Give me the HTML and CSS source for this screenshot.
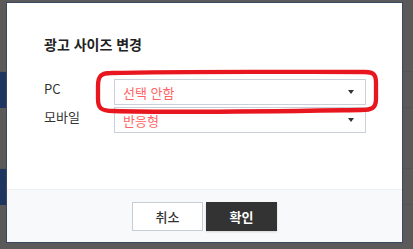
FILE: index.html
```html
<!DOCTYPE html>
<html lang="ko">
<head>
<meta charset="utf-8">
<link rel="stylesheet" href="styles.css">
</head>
<body>
<div class="page">
  <div class="page-row page-row--top"></div>
  <div class="page-row page-row--nav"><span class="nav-block"></span></div>
  <div class="page-row page-row--mid"></div>
  <div class="page-row page-row--nav"><span class="nav-block"></span></div>
</div>

<div class="modal">
  <div class="modal-body">
    <h2 class="modal-title">광고 사이즈 변경</h2>
    <div class="form">
      <div class="form-row">
        <span class="form-label">PC</span>
        <div class="select"><span class="select-value">선택 안함</span><span class="select-arrow"></span></div>
      </div>
      <div class="form-row">
        <span class="form-label">모바일</span>
        <div class="select"><span class="select-value">반응형</span><span class="select-arrow"></span></div>
      </div>
    </div>
  </div>
  <div class="modal-footer">
    <button class="btn btn--cancel">취소</button>
    <button class="btn btn--ok">확인</button>
  </div>
</div>

<svg class="annotation" width="290" height="48" viewBox="0 0 290 48">
  <path d="M16 4 C90 2 200 3 270 3 C279 3 281 6 281 14 L281 30 C281 39 277 41 266 41 C200 42 90 44 18 42 C6 42 3 39 3 30 L3 17 C3 7 6 4 16 4 Z" fill="none" stroke="#e8161e" stroke-width="4.3"/>
</svg>
</body>
</html>
```

FILE: styles.css
```css
* { box-sizing: border-box; }
html, body { margin: 0; padding: 0; }
body {
  width: 413px;
  height: 249px;
  overflow: hidden;
  position: relative;
  background: #5a5a5a;
  font-family: "Noto Sans CJK KR", "Noto Sans", sans-serif;
}
.page { display: flex; flex-direction: column; }
.page-row { border-bottom: 1px solid #555; }
.page-row--top { height: 72px; }
.page-row--nav { height: 36px; }
.page-row--mid { height: 61px; }
.nav-block { display: block; width: 6px; height: 36px; background: #1d355f; }

.modal {
  position: absolute;
  left: 7px;
  top: 3px;
  width: 395px;
  height: 239px;
  background: #fff;
  box-shadow: 0 0 0 1px #3a4760;
  display: flex;
  flex-direction: column;
}
.modal-body { flex: 1; padding: 29px 36px 0 37px; }
.modal-title {
  margin: 0;
  font-size: 14px;
  line-height: 24px;
  font-weight: 700;
  color: #222;
}
.form { margin-top: 23px; display: flex; flex-direction: column; gap: 2px; }
.form-row { display: flex; align-items: flex-start; }
.form-label {
  width: 70px;
  font-size: 13px;
  line-height: 20px;
  color: #333;
}
.select {
  width: 252px;
  height: 26px;
  border: 1px solid #cbd0d8;
  background: #fff;
  display: flex;
  align-items: center;
  justify-content: space-between;
  padding: 0 11px 0 8px;
}
.select-value { font-size: 13px; line-height: 18px; color: #ff6464; margin-top: 1px; }
.select-arrow {
  width: 0; height: 0;
  border-left: 3.5px solid transparent;
  border-right: 3.5px solid transparent;
  border-top: 4px solid #333;
}

.modal-footer {
  height: 53px;
  background: #f8f9fb;
  border-top: 1px solid #eef0f4;
  display: flex;
  justify-content: center;
  align-items: flex-start;
  gap: 3px;
  padding-top: 12px;
}
.btn {
  width: 71px;
  height: 29px;
  font-family: "Noto Sans CJK KR", "Noto Sans", sans-serif;
  font-size: 13px;
  font-weight: 500;
  padding: 0;
  cursor: pointer;
}
.btn--cancel { background: #fff; border: 1px solid #c6cdd7; color: #333; }
.btn--ok { background: #333; border: 1px solid #333; color: #fff; font-weight: 700; box-shadow: 0 1px 2px rgba(0,0,0,0.15); }

.annotation { position: absolute; left: 95px; top: 69px; }
```
